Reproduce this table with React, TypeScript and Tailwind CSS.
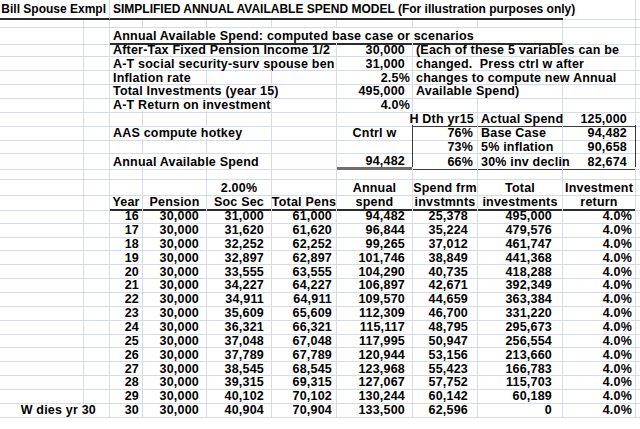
type Bottom = "grid" | "thick" | "gray" | "box";
type Right = "grid" | "none" | "box";

type CellProps = {
  t?: string;
  span?: number;
  a?: "l" | "r" | "c";
  pr?: string;
  b?: Bottom;
  r?: Right;
};

const spans: Record<number, string> = {
  1: "col-span-1",
  2: "col-span-2",
  3: "col-span-3",
  4: "col-span-4",
  5: "col-span-5",
  6: "col-span-6",
  7: "col-span-7",
  8: "col-span-8",
};

const bottoms: Record<Bottom, string> = {
  grid: "border-b border-b-[#d5dce8]",
  thick: "border-b-2 border-b-[#2b2b2b]",
  gray: "border-b-[3px] border-b-[#6e6e6e]",
  box: "border-b border-b-[#3c3c3c]",
};

const rights: Record<Right, string> = {
  grid: "border-r border-r-[#d5dce8]",
  none: "",
  box: "border-r border-r-[#3c3c3c]",
};

const aligns = {
  l: "justify-start pl-[3px]",
  r: "justify-end",
  c: "justify-center",
};

function Cell({ t = "", span = 1, a = "l", pr = "", b = "grid", r = "grid" }: CellProps) {
  return (
    <div
      className={`flex items-center pt-[2px] whitespace-pre overflow-visible ${spans[span]} ${aligns[a]} ${pr} ${bottoms[b]} ${rights[r]}`}
    >
      {t}
    </div>
  );
}

const cols = "grid grid-cols-[84px_26px_33px_64px_65px_65px_76px_65px_85px_73px_4px] h-[13.86px]";

// empty cells
const blank = (n: number) => Array.from({ length: n }, (_, i) => <Cell key={"b" + i} />);

const years: [string, string, string, string, string, string, string][] = [
  ["16", "30,000", "31,000", "61,000", "94,482", "25,378", "495,000"],
  ["17", "30,000", "31,620", "61,620", "96,844", "35,224", "479,576"],
  ["18", "30,000", "32,252", "62,252", "99,265", "37,012", "461,747"],
  ["19", "30,000", "32,897", "62,897", "101,746", "38,849", "441,368"],
  ["20", "30,000", "33,555", "63,555", "104,290", "40,735", "418,288"],
  ["21", "30,000", "34,227", "64,227", "106,897", "42,671", "392,349"],
  ["22", "30,000", "34,911", "64,911", "109,570", "44,659", "363,384"],
  ["23", "30,000", "35,609", "65,609", "112,309", "46,700", "331,220"],
  ["24", "30,000", "36,321", "66,321", "115,117", "48,795", "295,673"],
  ["25", "30,000", "37,048", "67,048", "117,995", "50,947", "256,554"],
  ["26", "30,000", "37,789", "67,789", "120,944", "53,156", "213,660"],
  ["27", "30,000", "38,545", "68,545", "123,968", "55,423", "166,783"],
  ["28", "30,000", "39,315", "69,315", "127,067", "57,752", "115,703"],
  ["29", "30,000", "40,102", "70,102", "130,244", "60,142", "60,189"],
  ["30", "30,000", "40,904", "70,904", "133,500", "62,596", "0"],
];

const K = () => <Cell r="none" />;

export default function App() {
  return (
    <div className="w-[640px] h-[429px] bg-white text-black font-['Liberation_Sans',Arial,sans-serif] font-bold text-[12.5px] tracking-[0.2px] leading-none overflow-hidden">
      {/* title */}
      <div className="grid grid-cols-[84px_26px_33px_64px_65px_65px_76px_65px_85px_73px_4px] h-[20px] text-[12px] tracking-normal [&>div]:items-end [&>div]:pb-[3px]">
        <Cell t="Bill Spouse Exmpl" span={2} a="r" pr="pr-[3px]" b="thick" />
        <Cell t="SIMPLIFIED ANNUAL AVAILABLE SPEND MODEL (For illustration purposes only)" span={7} b="thick" r="none" />
        <Cell />
        <K />
      </div>
      <div className="grid grid-cols-[84px_26px_33px_64px_65px_65px_76px_65px_85px_73px_4px] h-[8px] [&>div]:pt-0">
        {blank(10)}
        <K />
      </div>

      {/* inputs */}
      <div className={cols}>
        <Cell />
        <Cell />
        <Cell t="Annual Available Spend: computed base case or scenarios" span={7} b="thick" />
        <Cell />
        <K />
      </div>
      <div className={cols}>
        <Cell />
        <Cell />
        <Cell t="After-Tax Fixed Pension Income 1/2" span={4} />
        <Cell t="30,000" a="r" pr="pr-[7px]" />
        <Cell t="(Each of these 5 variables can be" span={3} />
        <K />
      </div>
      <div className={cols}>
        <Cell />
        <Cell />
        <Cell t="A-T social security-surv spouse ben" span={4} />
        <Cell t="31,000" a="r" pr="pr-[7px]" />
        <Cell t="changed.  Press ctrl w after" span={3} />
        <K />
      </div>
      <div className={cols}>
        <Cell />
        <Cell />
        <Cell t="Inflation rate" span={2} />
        <Cell />
        <Cell />
        <Cell t="2.5%" a="r" pr="pr-[2px]" />
        <Cell t="changes to compute new Annual" span={3} />
        <K />
      </div>
      <div className={cols}>
        <Cell />
        <Cell />
        <Cell t="Total Investments (year 15)" span={3} />
        <Cell />
        <Cell t="495,000" a="r" pr="pr-[7px]" />
        <Cell t="Available Spend)" span={2} />
        <Cell />
        <K />
      </div>
      <div className={cols}>
        <Cell />
        <Cell />
        <Cell t="A-T Return on investment" span={3} />
        <Cell />
        <Cell t="4.0%" a="r" pr="pr-[2px]" />
        <Cell />
        <Cell />
        <Cell />
        <K />
      </div>

      {/* scenarios box */}
      <div className={cols}>
        {blank(7)}
        <Cell t="H Dth yr15" a="r" pr="pr-[3px]" b="box" />
        <Cell t="Actual Spend" b="box" />
        <Cell t="125,000" a="r" pr="pr-[8px]" b="box" />
        <K />
      </div>
      <div className={cols}>
        <Cell />
        <Cell />
        <Cell t="AAS compute hotkey" span={3} />
        <Cell />
        <Cell t="Cntrl w" a="c" r="box" />
        <Cell t="76%" a="r" pr="pr-[4px]" />
        <Cell t="Base Case" />
        <Cell t="94,482" a="r" pr="pr-[8px]" r="box" />
        <K />
      </div>
      <div className={cols}>
        {blank(6)}
        <Cell r="box" />
        <Cell t="73%" a="r" pr="pr-[4px]" />
        <Cell t="5% inflation" />
        <Cell t="90,658" a="r" pr="pr-[8px]" r="box" />
        <K />
      </div>
      <div className={cols}>
        <Cell />
        <Cell />
        <Cell t="Annual Available Spend" span={3} />
        <Cell />
        <Cell t="94,482" a="r" pr="pr-[7px]" b="gray" r="box" />
        <Cell t="66%" a="r" pr="pr-[4px]" b="box" />
        <Cell t="30% inv declin" b="box" />
        <Cell t="82,674" a="r" pr="pr-[8px]" b="box" r="box" />
        <K />
      </div>
      <div className={cols}>
        {blank(10)}
        <K />
      </div>

      {/* table header */}
      <div className={cols}>
        {blank(4)}
        <Cell t="2.00%" a="c" />
        <Cell />
        <Cell t="Annual" a="c" />
        <Cell t="Spend frm" a="c" />
        <Cell t="Total" a="c" />
        <Cell t="Investment" a="c" />
        <K />
      </div>
      <div className={cols}>
        <Cell />
        <Cell />
        <Cell t="Year" a="c" b="thick" />
        <Cell t="Pension" a="c" b="thick" />
        <Cell t="Soc Sec" a="c" b="thick" />
        <Cell t="Total Pens" a="c" b="thick" />
        <Cell t="spend" a="c" b="thick" />
        <Cell t="invstmnts" a="c" b="thick" />
        <Cell t="investments" a="c" b="thick" />
        <Cell t="return" a="c" b="thick" />
        <K />
      </div>

      {years.map(([y, pen, ss, tot, spend, frm, inv]) => (
        <div key={y} className={cols}>
          {y === "30" ? (
            <Cell t="W dies yr 30" span={2} a="r" pr="pr-[13px]" />
          ) : (
            <>
              <Cell />
              <Cell />
            </>
          )}
          <Cell t={y} a="r" pr="pr-[3px]" />
          <Cell t={pen} a="r" pr="pr-[7px]" />
          <Cell t={ss} a="r" pr="pr-[7px]" />
          <Cell t={tot} a="r" pr="pr-[4px]" />
          <Cell t={spend} a="r" pr="pr-[7px]" />
          <Cell t={frm} a="r" pr="pr-[9px]" />
          <Cell t={inv} a="r" pr="pr-[10px]" />
          <Cell t="4.0%" a="r" pr="pr-[3px]" />
          <K />
        </div>
      ))}
    </div>
  );
}
